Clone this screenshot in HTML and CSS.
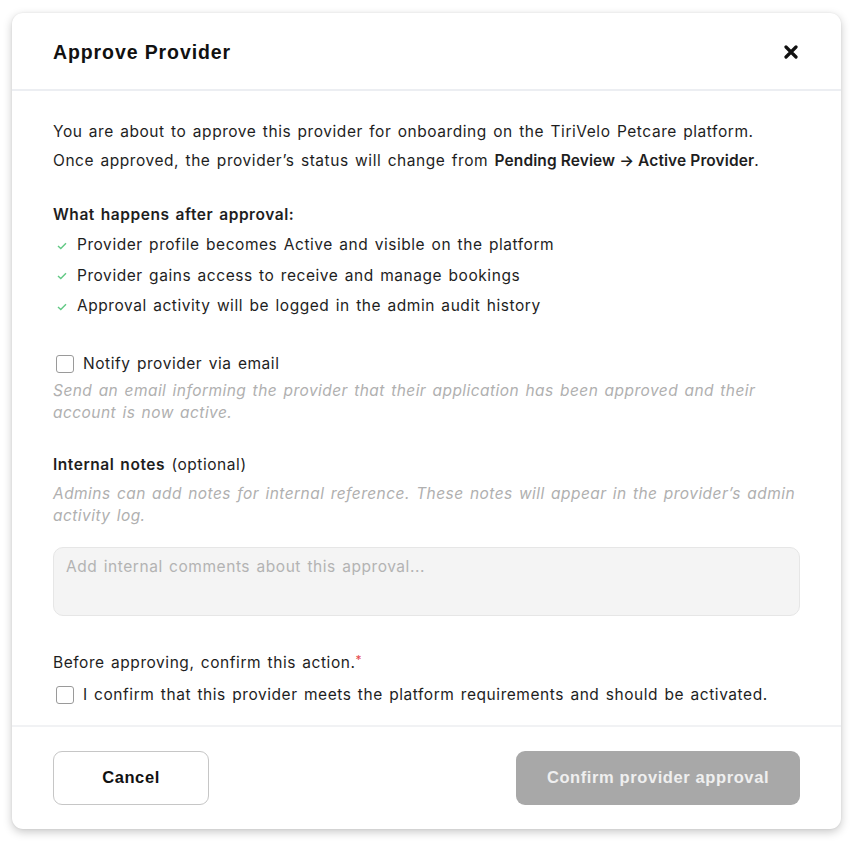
FILE: index.html
```html
<!DOCTYPE html>
<html lang="en">
<head>
<meta charset="utf-8">
<title>Approve Provider</title>
<link rel="stylesheet" href="styles.css">
</head>
<body>
<div class="modal">
  <header class="modal-header">
    <h2 class="title">Approve Provider</h2>
    <button class="close" aria-label="Close">
      <svg width="14" height="14" viewBox="0 0 14 14"><path d="M2 2 L12 12 M12 2 L2 12" stroke="#111" stroke-width="3.2" stroke-linecap="round"/></svg>
    </button>
  </header>
  <div class="modal-body">
    <p class="intro">You are about to approve this provider for onboarding on the TiriVelo Petcare platform.</p>
    <p class="intro">Once approved, the provider’s status will change from <strong>Pending Review → Active Provider</strong>.</p>

    <h3 class="section-title">What happens after approval:</h3>
    <ul class="checks">
      <li><svg class="tick" width="10" height="8" viewBox="0 0 10 8"><path d="M1 4 L3.8 6.6 L9 1.2" fill="none" stroke="#62c985" stroke-width="1.4"/></svg>Provider profile becomes Active and visible on the platform</li>
      <li><svg class="tick" width="10" height="8" viewBox="0 0 10 8"><path d="M1 4 L3.8 6.6 L9 1.2" fill="none" stroke="#62c985" stroke-width="1.4"/></svg>Provider gains access to receive and manage bookings</li>
      <li><svg class="tick" width="10" height="8" viewBox="0 0 10 8"><path d="M1 4 L3.8 6.6 L9 1.2" fill="none" stroke="#62c985" stroke-width="1.4"/></svg>Approval activity will be logged in the admin audit history</li>
    </ul>

    <label class="check-row notify"><span class="box"></span>Notify provider via email</label>
    <p class="helper">Send an email informing the provider that their application has been approved and their account is now active.</p>

    <h3 class="notes-title"><strong>Internal notes</strong> (optional)</h3>
    <p class="helper">Admins can add notes for internal reference. These notes will appear in the provider’s admin activity log.</p>
    <div class="textarea">Add internal comments about this approval...</div>

    <p class="confirm-title">Before approving, confirm this action.<span class="req">*</span></p>
    <label class="check-row"><span class="box"></span>I confirm that this provider meets the platform requirements and should be activated.</label>
  </div>
  <footer class="modal-footer">
    <button class="btn btn-cancel">Cancel</button>
    <button class="btn btn-confirm">Confirm provider approval</button>
  </footer>
</div>
</body>
</html>
```
FILE: styles.css
```css
* { box-sizing: border-box; }
html, body { margin: 0; padding: 0; background: #ffffff; }
body {
  font-family: Inter, "Noto Sans", sans-serif;
  color: #1e1e1e;
  padding: 13px 17px 18px 12px;
}
.modal {
  width: 829px;
  background: #fff;
  border-radius: 11px;
  box-shadow: 0 3px 10px rgba(0,0,0,0.22), 0 0 2px rgba(0,0,0,0.08);
}
.modal-header {
  height: 78px;
  display: flex;
  align-items: center;
  justify-content: space-between;
  padding: 0 43px 0 41px;
  border-bottom: 2px solid #eceef2;
}
.title {
  margin: 0;
  font-family: "Liberation Sans", Arial, sans-serif;
  font-weight: 700;
  font-size: 19.5px;
  letter-spacing: 0.9px;
  color: #111;
  padding-top: 2px;
}
.close {
  border: 0;
  background: none;
  padding: 0;
  display: flex;
  margin-top: 2px;
}
.modal-body {
  padding: 26px 41px 17px 41px;
  font-size: 15.5px;
  letter-spacing: 0.55px;
  word-spacing: 1.5px;
}
p { margin: 0; }
.intro { line-height: 29px; }
.intro strong { font-weight: 600; letter-spacing: 0.1px; word-spacing: 0; }
.section-title {
  margin: 27px 0 2px;
  font-size: 15.5px;
  font-weight: 600;
  line-height: 26px;
}
.checks {
  list-style: none;
  margin: 0;
  padding: 0;
}
.checks li {
  display: flex;
  align-items: center;
  line-height: 30.5px;
}
.tick { margin: 1px 10px 0 4px; flex: none; }
.check-row {
  display: flex;
  align-items: center;
  line-height: 26px;
}
.notify { margin-top: 29px; }
.box {
  width: 18px;
  height: 18px;
  border: 1.5px solid #9a9a9a;
  border-radius: 3px;
  margin: 0 9px 0 3px;
  flex: none;
}
.helper {
  color: #b0b0b0;
  font-style: italic;
  line-height: 22px;
  margin-top: 3px;
  letter-spacing: 0.45px;
}
.notes-title {
  margin: 28px 0 5px;
  font-size: 15.5px;
  font-weight: 400;
  line-height: 26px;
}
.notes-title strong { font-weight: 600; }
.textarea {
  margin-top: 20px;
  height: 69px;
  background: #f4f4f4;
  border: 1.5px solid #e6e6e6;
  border-radius: 10px;
  padding: 8px 12px;
  color: #b3b3b3;
  line-height: 21px;
}
.confirm-title {
  margin-top: 31px;
  line-height: 26px;
}
.req { color: #e5484d; font-size: 12px; vertical-align: 4px; }
.confirm-title + .check-row { margin-top: 6px; }
.modal-footer {
  border-top: 2px solid #f1f2f4;
  padding: 24px 41px 24px 41px;
  display: flex;
  justify-content: space-between;
}
.btn {
  height: 54px;
  border-radius: 9px;
  font-family: "Liberation Sans", Arial, sans-serif;
  font-weight: 700;
  font-size: 16.5px;
  letter-spacing: 0.6px;
}
.btn-cancel {
  width: 156px;
  background: #fff;
  border: 1.5px solid #c6c6c6;
  color: #111;
}
.btn-confirm {
  width: 284px;
  background: #a8a8a8;
  border: 0;
  color: #efefef;
}
```
